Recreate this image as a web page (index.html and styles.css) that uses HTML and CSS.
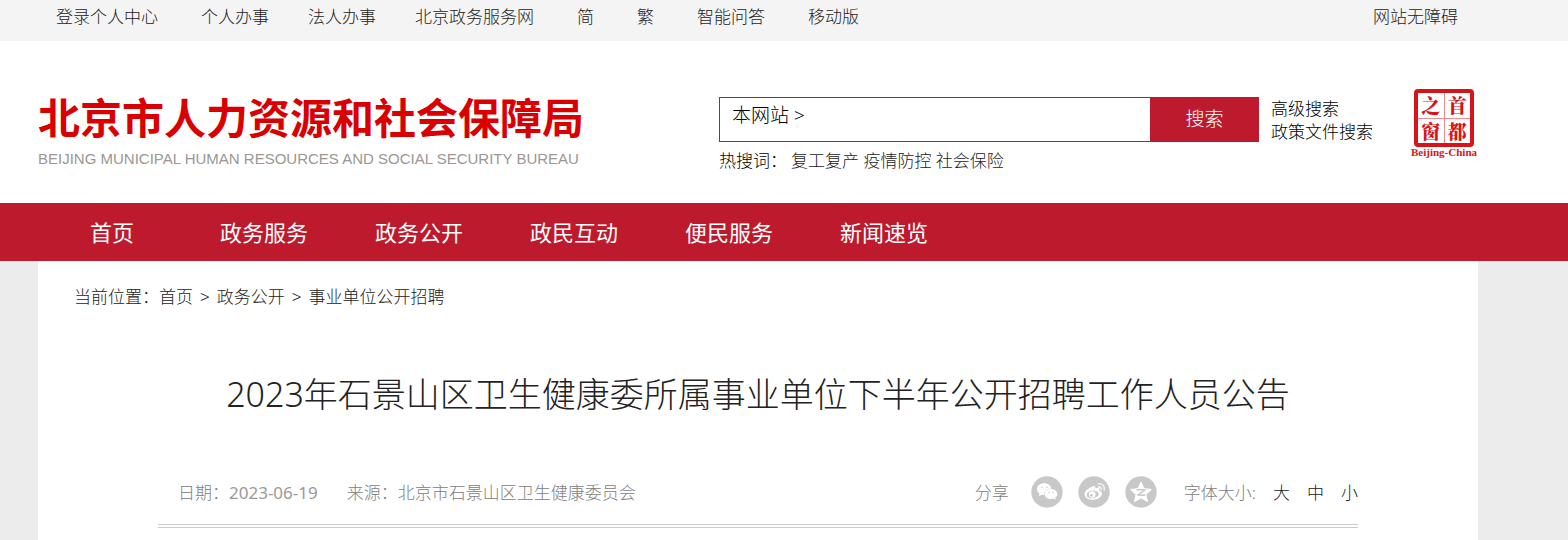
FILE: index.html
```html
<!DOCTYPE html>
<html lang="zh-CN">
<head>
<meta charset="utf-8">
<meta name="viewport" content="width=device-width, initial-scale=1">
<title>2023年石景山区卫生健康委所属事业单位下半年公开招聘工作人员公告</title>
<link rel="stylesheet" href="styles.css">
</head>
<body>
<div class="topbar">
  <ul class="topbar-links">
    <li><a href="#">登录个人中心</a></li>
    <li class="service-links"><a href="#">个人办事</a><a href="#">法人办事</a><a href="#">北京政务服务网</a></li>
    <li><a href="#">简</a></li>
    <li><a href="#">繁</a></li>
    <li><a href="#">智能问答</a></li>
    <li><a href="#">移动版</a></li>
  </ul>
  <a href="#">网站无障碍</a>
</div>

<header class="header">
  <a class="logo" href="#">
    <span class="logo-zh">北京市人力资源和社会保障局</span>
    <span class="logo-en" lang="en">BEIJING MUNICIPAL HUMAN RESOURCES AND SOCIAL SECURITY BUREAU</span>
  </a>
  <div class="search">
    <form class="search-form">
      <div class="search-box">
        <button class="search-scope" type="button">本网站 &gt;</button>
        <input class="search-input" type="text" aria-label="搜索内容">
      </div>
      <button class="search-submit" type="submit">搜索</button>
    </form>
    <p class="hot-words"><span class="hot-label">热搜词：</span><a href="#">复工复产</a> <a href="#">疫情防控</a> <a href="#">社会保险</a></p>
  </div>
  <div class="search-more">
    <a href="#">高级搜索</a>
    <a href="#">政策文件搜索</a>
  </div>
  <a class="seal" href="#" aria-label="首都之窗">
    <span class="seal-box">
      <span class="seal-cell">之</span><span class="seal-cell">首</span>
      <span class="seal-cell">窗</span><span class="seal-cell">都</span>
    </span>
    <span class="seal-caption">Beijing-China</span>
  </a>
</header>

<nav class="nav">
  <a href="#">首页</a>
  <a href="#">政务服务</a>
  <a href="#">政务公开</a>
  <a href="#">政民互动</a>
  <a href="#">便民服务</a>
  <a href="#">新闻速览</a>
</nav>

<main class="content">
  <div class="crumbs">当前位置：<a href="#">首页</a><span class="crumb-sep">&gt;</span><a href="#">政务公开</a><span class="crumb-sep">&gt;</span><a href="#">事业单位公开招聘</a></div>
  <article class="article">
    <h1 class="title">2023年石景山区卫生健康委所属事业单位下半年公开招聘工作人员公告</h1>
    <div class="meta">
      <div class="meta-source">
        <span>日期：<time datetime="2023-06-19">2023-06-19</time></span>
        <span>来源：北京市石景山区卫生健康委员会</span>
      </div>
      <div class="meta-tools">
        <span>分享</span>
        <div class="share">
          <a href="#" aria-label="微信">
            <svg class="share-icon" viewBox="0 0 32 32">
              <circle cx="16" cy="16" r="15.7" fill="#c8c8c8"/>
              <path fill="#fff" d="M13.4 7.2c-4.400 0-7.500 2.600-7.500 5.900 0 1.900 1 3.500 2.600 4.600l-.8 2.500 3-1.500c.8.2 1.600.4 2.400.4-.1-3.900 3-6.700 7.300-6.700-.7-3.100-3.500-5.200-7-5.200z"/>
              <path fill="#fff" d="M20 12.900c-3.800 0-6.400 2.300-6.400 5s2.600 5 6.400 5c.8 0 1.500-.1 2.200-.3l2.500 1.300-.6-2.200c1.300-.9 2.200-2.200 2.200-3.800 0-2.700-2.700-5-6.300-5z"/>
              <g fill="#c8c8c8"><circle cx="10.800" cy="11.200" r=".8"/><circle cx="16" cy="11.200" r=".8"/><circle cx="18" cy="16.300" r=".7"/><circle cx="22.200" cy="16.300" r=".7"/></g>
            </svg>
          </a>
          <a href="#" aria-label="微博">
            <svg class="share-icon" viewBox="0 0 32 32">
              <circle cx="16" cy="16" r="15.700" fill="#c8c8c8"/>
              <path fill="#fff" d="M14.300 10.500c1.900-.8 3.400-.4 3.100 1.800 2.200-.8 4.300-.7 4.100 1.100 0 .6-.5 1.200 0 1.500 1.700.5 2.500 1.400 2.500 2.700 0 3.200-4.200 6.200-9.200 6.200-4.700 0-8.200-2.200-8.200-5.500 0-3 3.600-6.200 7.700-7.800z"/>
              <ellipse cx="14.700" cy="18.400" rx="6.100" ry="3.900" fill="#c8c8c8" transform="rotate(-7 14.700 18.400)"/>
              <circle cx="14.300" cy="18.500" r="3.300" fill="#fff"/>
              <circle cx="13.500" cy="19.200" r="1.300" fill="#c8c8c8"/>
              <g fill="none" stroke="#fff" stroke-opacity=".8" stroke-width="1.500" stroke-linecap="round"><path d="M20.300 8c3.900-1 7 2.300 5.900 6.200"/><path d="M20.600 10.900c1.700-.4 3.100 1 2.600 2.700"/></g>
            </svg>
          </a>
          <a href="#" aria-label="QQ空间">
            <svg class="share-icon" viewBox="0 0 32 32">
              <circle cx="16" cy="16" r="15.700" fill="#c8c8c8"/>
              <path fill="#fff" stroke="#fff" stroke-linejoin="round" d="M16 6l3 6.700 7.400.8-5.500 5 1.600 7.100-6.500-3.700-6.500 3.700 1.600-7.100-5.500-5 7.400-.8z"/>
              <path fill="none" stroke="#c8c8c8" stroke-width="1.500" d="M11.700 13.900c3-.6 5.700-.6 8.200 0l-6.800 5c2.700.6 5 .6 7.300.2"/>
            </svg>
          </a>
        </div>
        <div class="font-size">
          <span>字体大小:</span>
          <button type="button">大</button>
          <button type="button">中</button>
          <button type="button">小</button>
        </div>
      </div>
    </div>
  </article>
</main>
</body>
</html>
```
FILE: styles.css
```css
* {
  box-sizing: border-box;
}

body {
  margin: 0;
  min-height: 100vh;
  display: flex;
  flex-direction: column;
  background: #ececec;
  color: #222;
  font: 300 17px/23px "Noto Sans", "Noto Sans CJK SC", sans-serif;
}

a {
  color: inherit;
  text-decoration: none;
}

button {
  padding: 0;
  border: 0;
  background: none;
  color: inherit;
  font: inherit;
  cursor: pointer;
}

.topbar {
  display: flex;
  justify-content: space-between;
  padding: 5px 110px 13px 56px;
  background: #f4f4f4;
}

.topbar-links {
  display: flex;
  gap: 43px;
  margin: 0;
  padding: 0;
  list-style: none;
}

.service-links {
  display: flex;
  gap: 39px;
}

.header {
  display: flex;
  align-items: flex-start;
  padding: 48px 90px 31px 38px;
  background: #fff;
}

.logo {
  display: flex;
  flex-direction: column;
  padding-top: 5px;
  white-space: nowrap;
}

.logo-zh {
  color: #d80000;
  font: 700 42px/44px "Noto Sans CJK SC", sans-serif;
}

.logo-en {
  margin-top: 11px;
  color: #9b9792;
  font: 400 15px/20px "Liberation Sans", sans-serif;
}

.search {
  width: 540px;
  margin-left: auto;
  padding-top: 8px;
}

.search-form {
  display: flex;
}

.search-box {
  display: flex;
  flex: 1;
  align-items: flex-start;
  height: 45px;
  padding: 4px 0 0 12px;
  border: 1px solid #bd1a2d;
  border-right: 0;
}

.search-scope {
  color: #000;
  font-size: 19px;
  line-height: 26px;
}

.search-input {
  flex: 1;
  min-width: 0;
  height: 30px;
  border: 0;
  outline: 0;
  background: none;
  font: inherit;
}

.search-submit {
  width: 109px;
  height: 45px;
  background: #bd1a2d;
  color: #fff;
  font-size: 19px;
}

.hot-words {
  margin: 7px 0 0;
}

.hot-label {
  margin-right: 4px;
  color: #000;
}

.search-more {
  display: flex;
  flex-direction: column;
  margin-left: 12px;
  padding-top: 8px;
  color: #000;
}

.seal {
  display: flex;
  flex-direction: column;
  align-items: center;
  width: 66px;
  margin: 0 1px 0 38px;
  color: #d7141a;
}

.seal-box {
  display: grid;
  grid-template-columns: 1fr 1fr;
  gap: 1px;
  width: 60px;
  height: 58px;
  border: 4px solid #d7141a;
  border-radius: 4px;
  background: #ec8a8c;
}

.seal-cell {
  background: #fff;
  font: 900 19px/24px "Noto Serif CJK SC", "Noto Sans CJK SC", sans-serif;
  text-align: center;
}

.seal-caption {
  font: 700 11px/11px "Liberation Serif", serif;
}

.nav {
  display: flex;
  gap: 67px;
  padding: 14px 90px;
  background: #bd1a2d;
  color: #fff;
  font-size: 22px;
  font-weight: 400;
  line-height: 30px;
}

.nav a:first-child {
  margin-right: 19px;
}

.content {
  flex: 1;
  margin: 0 90px 0 38px;
  padding: 24px 36px 0;
  background: #fff;
}

.crumb-sep {
  margin: 0 7px;
}

.article {
  margin: 0 84px;
}

.title {
  margin: 63px 0 0;
  color: #222;
  font-size: 34px;
  font-weight: 300;
  line-height: 46px;
  text-align: center;
}

.meta {
  display: flex;
  justify-content: space-between;
  align-items: center;
  margin-top: 55px;
  padding: 4px 0 16px 20px;
  border-bottom: 4px double #ccc;
  color: #808080;
}

.meta time {
  color: #999;
  font-weight: 400;
}

.meta-source,
.meta-tools,
.share,
.font-size {
  display: flex;
  align-items: center;
}

.meta-source {
  gap: 29px;
}

.meta-tools {
  gap: 22px;
}

.share {
  gap: 15px;
  margin-right: 5px;
}

.share-icon {
  display: block;
  width: 32px;
  height: 32px;
}

.font-size {
  gap: 17px;
}

.font-size button {
  color: #222;
}
```
